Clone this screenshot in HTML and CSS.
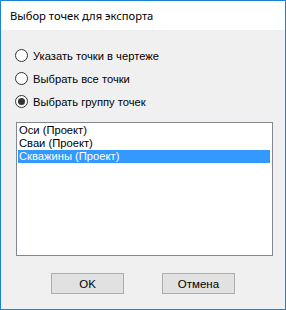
FILE: index.html
```html
<!DOCTYPE html>
<html lang="ru">
<head>
    <meta charset="UTF-8">
    <title>Выбор точек для экспорта</title>
    <link rel="stylesheet" href="styles.css">
</head>
<body>
    <div class="window">
        <div class="titlebar">Выбор точек для экспорта</div>
        <div class="content">
            <div class="options">
                <label class="option"><span class="radio"></span>Указать точки в чертеже</label>
                <label class="option"><span class="radio"></span>Выбрать все точки</label>
                <label class="option"><span class="radio checked"></span>Выбрать группу точек</label>
            </div>
            <ul class="listbox">
                <li>Оси (Проект)</li>
                <li>Сваи (Проект)</li>
                <li class="selected">Скважины (Проект)</li>
            </ul>
            <div class="buttons">
                <button class="btn">OK</button>
                <button class="btn">Отмена</button>
            </div>
        </div>
    </div>
</body>
</html>
```

FILE: styles.css
```css
body {
    margin: 0;
    padding: 0;
    font-family: "Liberation Sans", Arial, sans-serif;
    font-size: 11px;
    color: #000;
}

.window {
    width: 286px;
    height: 310px;
    box-sizing: border-box;
    border: 1px solid #1883d7;
    background-color: #f0f0f0;
    display: flex;
    flex-direction: column;
}

.titlebar {
    height: 29px;
    background-color: #fff;
    font-family: "Noto Sans", "Open Sans", sans-serif;
    font-size: 11.2px;
    line-height: 29px;
    padding-left: 9px;
}

.content {
    flex: 1;
    padding: 14px 13px 0 14px;
}

.options {
    display: flex;
    flex-direction: column;
}

.option {
    height: 23px;
    display: flex;
    align-items: center;
    font-size: 11.2px;
}

.radio {
    width: 11px;
    height: 11px;
    border: 1px solid #333;
    border-radius: 50%;
    background-color: #fff;
    margin-right: 5px;
    position: relative;
}

.radio.checked::after {
    content: "";
    position: absolute;
    left: 2px;
    top: 2px;
    width: 7px;
    height: 7px;
    border-radius: 50%;
    background-color: #333;
}

.listbox {
    list-style: none;
    margin: 9px 0 0 1px;
    padding: 1px;
    box-sizing: border-box;
    height: 134px;
    width: 257px;
    border: 1px solid #828790;
    background-color: #fff;
    font-size: 11.2px;
}

.listbox li {
    height: 13px;
    line-height: 13px;
    padding-left: 1px;
}

.listbox li.selected {
    background-color: #3399ff;
    color: #fff;
    margin-right: 1px;
}

.buttons {
    display: flex;
    justify-content: center;
    gap: 38px;
    margin-top: 17px;
    padding-right: 1px;
}

.btn {
    width: 73px;
    height: 21px;
    border: 1px solid #adadad;
    background-color: #e1e1e1;
    font-family: "Liberation Sans", Arial, sans-serif;
    font-size: 11.5px;
    color: #000;
    padding: 0;
}
```
